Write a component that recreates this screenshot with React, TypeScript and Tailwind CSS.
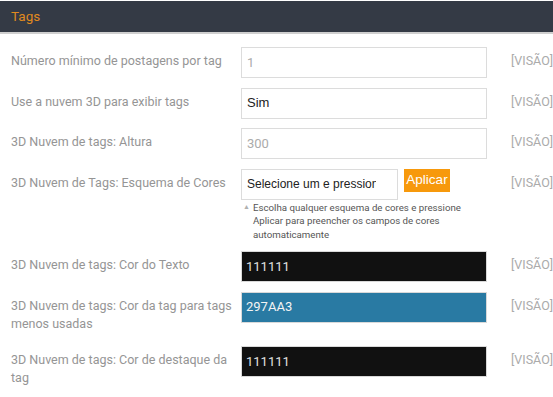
import React from 'react';

type Row = {
  label: string;
  value: string;
  kind: 'muted' | 'plain' | 'color';
  bg?: string;
};

const rows: Row[] = [
  { label: 'Número mínimo de postagens por tag', value: '1', kind: 'muted' },
  { label: 'Use a nuvem 3D para exibir tags', value: 'Sim', kind: 'plain' },
  { label: '3D Nuvem de tags: Altura', value: '300', kind: 'muted' },
];

const colorRows: Row[] = [
  { label: '3D Nuvem de tags: Cor do Texto', value: '111111', kind: 'color', bg: 'bg-[#111111] text-[#e0e0e0]' },
  { label: '3D Nuvem de tags: Cor da tag para tags menos usadas', value: '297AA3', kind: 'color', bg: 'bg-[#297aa3] text-[#f4f4f4]' },
  { label: '3D Nuvem de tags: Cor de destaque da tag', value: '111111', kind: 'color', bg: 'bg-[#111111] text-[#e0e0e0]' },
];

function Label({ text }: { text: string }) {
  return (
    <div className="pl-[11px] pr-2 pt-[5px] pb-[4px] text-[12.5px] leading-[18px] text-[#959595] font-['Roboto',sans-serif]">
      {text}
    </div>
  );
}

function Visao() {
  return (
    <div className="pl-[24px] pt-[5px] text-[12.5px] leading-[18px] text-[#ababab] font-['Roboto',sans-serif]">
      [VISÃO]
    </div>
  );
}

function Field({ row }: { row: Row }) {
  if (row.kind === 'color') {
    return (
      <div className={`h-[31px] w-[246px] border border-[#d9d9d9] pl-[4px] flex items-center text-[13px] font-['Roboto',sans-serif] ${row.bg}`}>
        {row.value}
      </div>
    );
  }
  const tone =
    row.kind === 'muted'
      ? "text-[#ababab] font-['Roboto',sans-serif] pl-[5px]"
      : "text-[#222] font-['Liberation_Sans',Arial,sans-serif] pl-[5px]";
  return (
    <div className={`h-[31px] w-[246px] border border-[#dcdcdc] bg-white flex items-center text-[13px] ${tone}`}>
      {row.value}
    </div>
  );
}

export default function App() {
  return (
    <div className="w-[553px] h-[397px] bg-white overflow-hidden">
      {/* Panel header */}
      <div className="mt-[1px] h-[31px] bg-[#343a45] border-b-2 border-[#cfcfcf] box-content flex items-center pl-[11px]">
        <span className="text-[13.5px] text-[#e08a1e] font-['Roboto',sans-serif]">Tags</span>
      </div>

      <div className="pt-[13px]">
        {rows.map((r, i) => (
          <div key={i} className="grid grid-cols-[241px_246px_1fr] mb-[9.5px]">
            <Label text={r.label} />
            <Field row={r} />
            <Visao />
          </div>
        ))}

        {/* Colour scheme row */}
        <div className="grid grid-cols-[241px_246px_1fr] mb-[10px]">
          <Label text="3D Nuvem de Tags: Esquema de Cores" />
          <div>
            <div className="flex items-start gap-[6px]">
              <div className="h-[31px] w-[157px] border border-[#dcdcdc] bg-white flex items-center pl-[5px] pr-[21px] overflow-hidden">
                <span className="block w-full overflow-hidden whitespace-nowrap text-[12px] text-[#222] font-['Liberation_Sans',Arial,sans-serif]">
                  Selecione um e pression
                </span>
              </div>
              <button className="h-[23px] w-[46px] bg-[#f7990c] text-white text-[13.5px] leading-none font-['Liberation_Sans',Arial,sans-serif]">
                Aplicar
              </button>
            </div>
            <div className="flex pt-[1px] w-[300px] font-['Roboto',sans-serif] text-[9.7px] leading-[13.5px] text-[#555]">
              <span className="w-[12px] pl-[2px] text-[7px] text-[#b0b0b0]">▲</span>
              <span>
                Escolha qualquer esquema de cores e pressione
                <br />
                Aplicar para preencher os campos de cores
                <br />
                automaticamente
              </span>
            </div>
          </div>
          <Visao />
        </div>

        {colorRows.map((r, i) => (
          <div key={i} className="grid grid-cols-[241px_246px_1fr] items-start mb-[9.5px]">
            <Label text={r.label} />
            <Field row={r} />
            <Visao />
          </div>
        ))}
      </div>
    </div>
  );
}
